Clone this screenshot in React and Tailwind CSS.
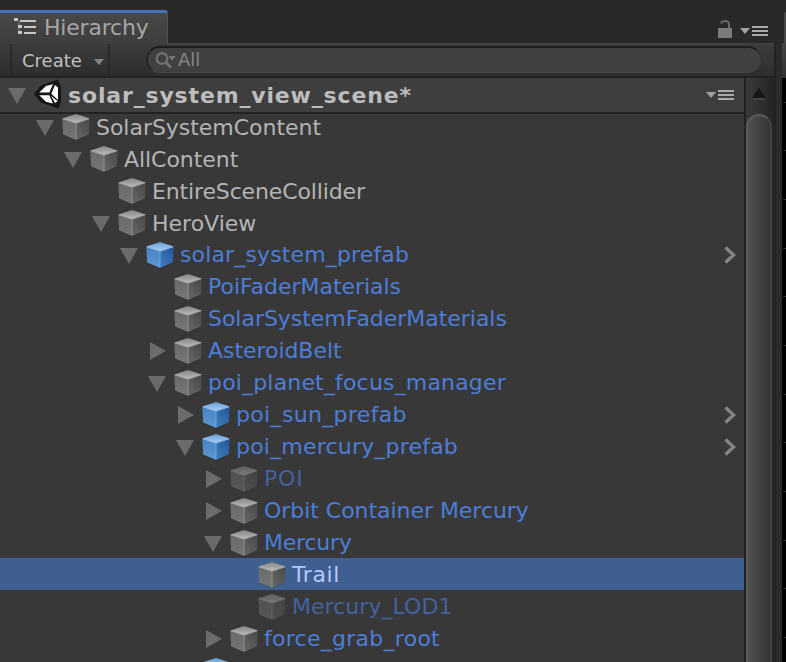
import React from "react";

const rows = [
  { depth: 0, arrow: "down", label: "SolarSystemContent", tone: "plain", track: "tracking-[-0.03px]" },
  { depth: 1, arrow: "down", label: "AllContent", tone: "plain", track: "tracking-[-0.05px]" },
  { depth: 2, arrow: "", label: "EntireSceneCollider", tone: "plain", track: "tracking-[-0.14px]" },
  { depth: 2, arrow: "down", label: "HeroView", tone: "plain", track: "tracking-[0px]" },
  { depth: 3, arrow: "down", label: "solar_system_prefab", tone: "prefab", blue: true, open: true, track: "tracking-[0.14px]" },
  { depth: 4, arrow: "", label: "PoiFaderMaterials", tone: "prefab", track: "tracking-[-0.03px]" },
  { depth: 4, arrow: "", label: "SolarSystemFaderMaterials", tone: "prefab", track: "tracking-[-0.03px]" },
  { depth: 4, arrow: "right", label: "AsteroidBelt", tone: "prefab", track: "tracking-[-0.05px]" },
  { depth: 4, arrow: "down", label: "poi_planet_focus_manager", tone: "prefab", track: "tracking-[0.17px]" },
  { depth: 5, arrow: "right", label: "poi_sun_prefab", tone: "prefab", blue: true, open: true, track: "tracking-[0.34px]" },
  { depth: 5, arrow: "down", label: "poi_mercury_prefab", tone: "prefab", blue: true, open: true, track: "tracking-[0.2px]" },
  { depth: 6, arrow: "right", label: "POI", tone: "dim", track: "tracking-[0.8px]" },
  { depth: 6, arrow: "right", label: "Orbit Container Mercury", tone: "prefab", track: "tracking-[-0.04px]" },
  { depth: 6, arrow: "down", label: "Mercury", tone: "prefab", track: "tracking-[-0.2px]" },
  { depth: 7, arrow: "", label: "Trail", tone: "selected", track: "tracking-[0.6px]" },
  { depth: 7, arrow: "", label: "Mercury_LOD1", tone: "dim", track: "tracking-[0.05px]" },
  { depth: 6, arrow: "right", label: "force_grab_root", tone: "prefab", track: "tracking-[0.27px]" },
  { depth: 5, arrow: "right", label: "poi_venus_prefab", tone: "prefab", blue: true, track: "tracking-[0.2px]" },
];

const tones = {
  plain: "text-[#b4b4b4] pt-[2px]",
  prefab: "text-[#4c7ed9] pt-px",
  dim: "text-[#42639f] pt-px",
  selected: "text-[#b4caff] pt-px",
};

function Gradients() {
  return (
    <svg className="absolute size-0" aria-hidden="true">
      <defs>
        <linearGradient id="gTop" x1="0" y1="0" x2="0" y2="1"><stop offset="0" stopColor="#858585" /><stop offset="1" stopColor="#bcbcbc" /></linearGradient>
        <linearGradient id="gLeft" x1="0" y1="0" x2="0" y2="1"><stop offset="0" stopColor="#6a6a6a" /><stop offset="1" stopColor="#757575" /></linearGradient>
        <linearGradient id="gRight" x1="0" y1="1" x2="1" y2="0"><stop offset="0" stopColor="#686868" /><stop offset="1" stopColor="#484848" /></linearGradient>
        <linearGradient id="bTop" x1="0" y1="0" x2="0" y2="1"><stop offset="0" stopColor="#659fdb" /><stop offset="1" stopColor="#a5cef4" /></linearGradient>
        <linearGradient id="bLeft" x1="0" y1="0" x2="0" y2="1"><stop offset="0" stopColor="#4584c5" /><stop offset="1" stopColor="#5c97cf" /></linearGradient>
        <linearGradient id="bRight" x1="0" y1="1" x2="1" y2="0"><stop offset="0" stopColor="#3f7dbd" /><stop offset="1" stopColor="#24579a" /></linearGradient>
      </defs>
    </svg>
  );
}

function Cube({ blue, dim }) {
  return (
    <svg viewBox="0 0 32 32" className={"size-8 shrink-0 " + (dim ? "opacity-50" : "")}>
      <path d="M3 11L16 15.5L29 11L28 25.5L16 31.2L4 25.5Z" fill="#000" opacity=".14" />
      <path d="M2.3 8.4L16 13V30L3.2 24.4Z" fill={blue ? "url(#bLeft)" : "url(#gLeft)"} />
      <path d="M29.7 8.4L16 13V30L28.8 24.4Z" fill={blue ? "url(#bRight)" : "url(#gRight)"} />
      <path d="M16 4L29.7 8.4L16 13L2.3 8.4Z" fill={blue ? "url(#bTop)" : "url(#gTop)"} />
      <path d="M3 8.8L16 13.2L29 8.8" fill="none" stroke={blue ? "#a8cdf0" : "#b5b5b5"} strokeWidth=".8" />
      <path d="M16 13V29.5" stroke={blue ? "#6ba6de" : "#8e8e8e"} strokeWidth="1" />
    </svg>
  );
}

function Arrow({ kind }) {
  return (
    <svg viewBox="0 0 28 32" className="h-8 w-7 shrink-0">
      {kind === "down" && <path d="M4 10H22L13 26Z" fill="#6b6b6b" />}
      {kind === "right" && <path d="M6 8V26L22 17Z" fill="#6b6b6b" />}
    </svg>
  );
}

function MenuIcon() {
  return (
    <svg viewBox="0 0 28 10" className="h-[10px] w-7">
      <path d="M0 2H10L5 8Z" fill="#a0a0a0" />
      <path d="M12 0H28V2H12ZM12 4H28V6H12ZM12 8H28V10H12Z" fill="#aaaaaa" />
    </svg>
  );
}

function Row({ row }) {
  const selected = row.tone === "selected";
  return (
    <div className={"flex h-8 shrink-0 items-center pr-2 " + (selected ? "bg-[#3e5f90]" : "")}>
      <div className="flex h-8 items-center" style={{ paddingLeft: 32 + row.depth * 28 }}>
        <Arrow kind={row.arrow} />
        <Cube blue={row.blue} dim={row.tone === "dim"} />
      </div>
      <span className={"ml-1 h-8 whitespace-pre text-[22px] leading-8 " + tones[row.tone] + " " + row.track}>{row.label}</span>
      {row.open && (
        <svg viewBox="0 0 12 18" className="ml-auto mt-[2px] h-[18px] w-3" fill="none">
          <path d="M1.5 1.5L9.5 9L1.5 16.5" stroke="#858585" strokeWidth="3.4" />
        </svg>
      )}
    </div>
  );
}

export default function App() {
  return (
    <div className="flex h-[662px] w-[786px] overflow-hidden bg-[#292929] font-['DejaVu_Sans',sans-serif]">
      <Gradients />
      <div className="flex w-[774px] shrink-0 flex-col">
        <div className="flex h-[43px] shrink-0 items-start justify-between pt-[10px]">
          <div className="flex h-[33px] w-[168px] items-center rounded-tr-[3px] border-t-[3px] border-r border-t-[#4371b5] border-r-[#505050] bg-linear-to-b from-[#484848] to-[#3e3e3e] pl-[14px]">
            <svg viewBox="0 0 22 16" className="-mt-1 h-4 w-[22px]" shapeRendering="crispEdges">
              <path d="M0 0H4V3H0ZM6 2H22V4H6ZM4 7H8V10H4ZM10 8H22V10H10ZM4 13H8V16H4ZM10 14H22V16H10Z" fill="#c8c8c8" />
              <path d="M4 3H6V7H4ZM4 10H6V13H4Z" fill="#656565" />
            </svg>
            <span className="ml-2 text-[22px] leading-[30px] tracking-[-0.2px] text-[#a6a6a6]">Hierarchy</span>
          </div>
          <div className="flex items-start pt-[10px] pr-[6px]">
            <svg viewBox="0 0 14 18" className="mr-2 h-[18px] w-[14px]">
              <path d="M0 8H14V18H0Z" fill="#7b7b7b" />
              <path d="M3 3.5Q4 1 7 1Q11 1 11 4.5V8" fill="none" stroke="#686868" strokeWidth="2" />
            </svg>
            <div className="pt-[6px]"><MenuIcon /></div>
          </div>
        </div>

        <div className="flex h-[35px] shrink-0 border-t border-b-2 border-t-[#404040] border-b-[#222222] bg-linear-to-b from-[#3c3c3c] to-[#2d2d2d] pl-[10px]">
          <div className="flex w-[100px] items-center border-x-2 border-[#292929] pl-[10px]">
            <span className="pt-[2px] text-[18px] leading-8 text-[#c0c0c0]">Create</span>
            <svg viewBox="0 0 10 6" className="mt-1 ml-[12px] h-[6px] w-[10px]">
              <path d="M0 0H10L5 6Z" fill="#858585" />
            </svg>
          </div>
          <div className="mt-[2px] ml-[36px] flex h-[27px] w-[615px] items-center rounded-full border-t-2 border-l-2 border-t-[#1c1c1c] border-l-[#252525] border-b border-b-[#454545] bg-[#404040] pl-[7px]">
            <svg viewBox="0 0 22 18" className="mt-[2px] h-[18px] w-[22px]" fill="none">
              <circle cx="7" cy="6.5" r="5.3" stroke="#727272" strokeWidth="2.2" />
              <path d="M11 10.5L16 15.5" stroke="#727272" strokeWidth="2.8" />
              <path d="M13.5 4H20.5L17 8.5Z" fill="#777" />
            </svg>
            <span className="ml-px text-[18px] leading-6 text-[#848484]">All</span>
          </div>
        </div>

        <div className="flex min-h-0 flex-1">
          <div className="flex w-[744px] flex-col bg-[#383838]">
            <div className="flex h-9 shrink-0 items-center border-b-2 border-[#222222] bg-[#3e3e3e] pr-[10px]">
              <svg viewBox="0 0 34 34" className="h-[34px] w-[34px]"><path d="M8 10H26L17 26Z" fill="#6b6b6b" /></svg>
              <svg viewBox="0 0 28 30" className="-mt-[2px] h-[30px] w-7">
                <path d="M0 15L7 6.5L24 .5L27 8V22L24.5 29.5L7 23.5Z" fill="#151515" />
                <path d="M5.2 13.5L12 7L19 5.2L15.3 13.5ZM21 6L24 8.6V21L17.3 14.8ZM5.2 16.3H15.3L19 24.6L12 22.8Z" fill="#fff" />
                <path d="M23.6 22.2L21 24L17 16.8Z" fill="#fff" />
              </svg>
              <span className="ml-[6px] pt-px text-[22px] leading-8 font-bold tracking-[0.84px] text-[#bdbdbd]">solar_system_view_scene*</span>
              <div className="ml-auto"><MenuIcon /></div>
            </div>
            <div className="flex min-h-0 flex-1 flex-col overflow-hidden">
              <div className="-mt-1 flex flex-col">
                {rows.map((row) => <Row key={row.label} row={row} />)}
              </div>
            </div>
          </div>
          <div className="flex w-[30px] flex-col border-l-2 border-[#222222] bg-linear-to-r from-[#3a3a3a] to-[#242424] pr-[2px]">
            <div className="flex h-9 shrink-0 items-start justify-center pt-[10px]">
              <svg viewBox="0 0 14 12" className="h-3 w-[14px]">
                <path d="M7 0L14 10H0Z" fill="#151515" /><path d="M1 11H13" stroke="#4c4c4c" strokeWidth="1.5" />
              </svg>
            </div>
            <div className="flex-1 rounded-t-[13px] border-t-2 border-r-2 border-l-2 border-t-[#5c5c5c] border-r-[#424242] border-l-[#5c5c5c] bg-linear-to-r from-[#515151] to-[#343434]" />
          </div>
        </div>
      </div>
      <div className="flex w-3 flex-col pt-[12px]">
        <div className="ml-[10px] h-[31px] w-[2px] rounded-tl bg-[#484848]" />
        <div className="flex h-[35px] border-l-2 border-[#222222]"><div className="w-[6px] bg-[#2a2a2a]" /><div className="flex-1 bg-linear-to-b from-[#444444] to-[#303030]" /></div>
        <div className="flex flex-1 border-l-2 border-[#222222]">
          <div className="w-[6px] bg-[#2a2a2a]" />
          <div className="flex flex-1 flex-col justify-around bg-black pl-[1px]">
            {Array.from({ length: 12 }, (_, i) => <div key={i} className="h-px bg-[#303030]" />)}
          </div>
        </div>
      </div>
    </div>
  );
}
